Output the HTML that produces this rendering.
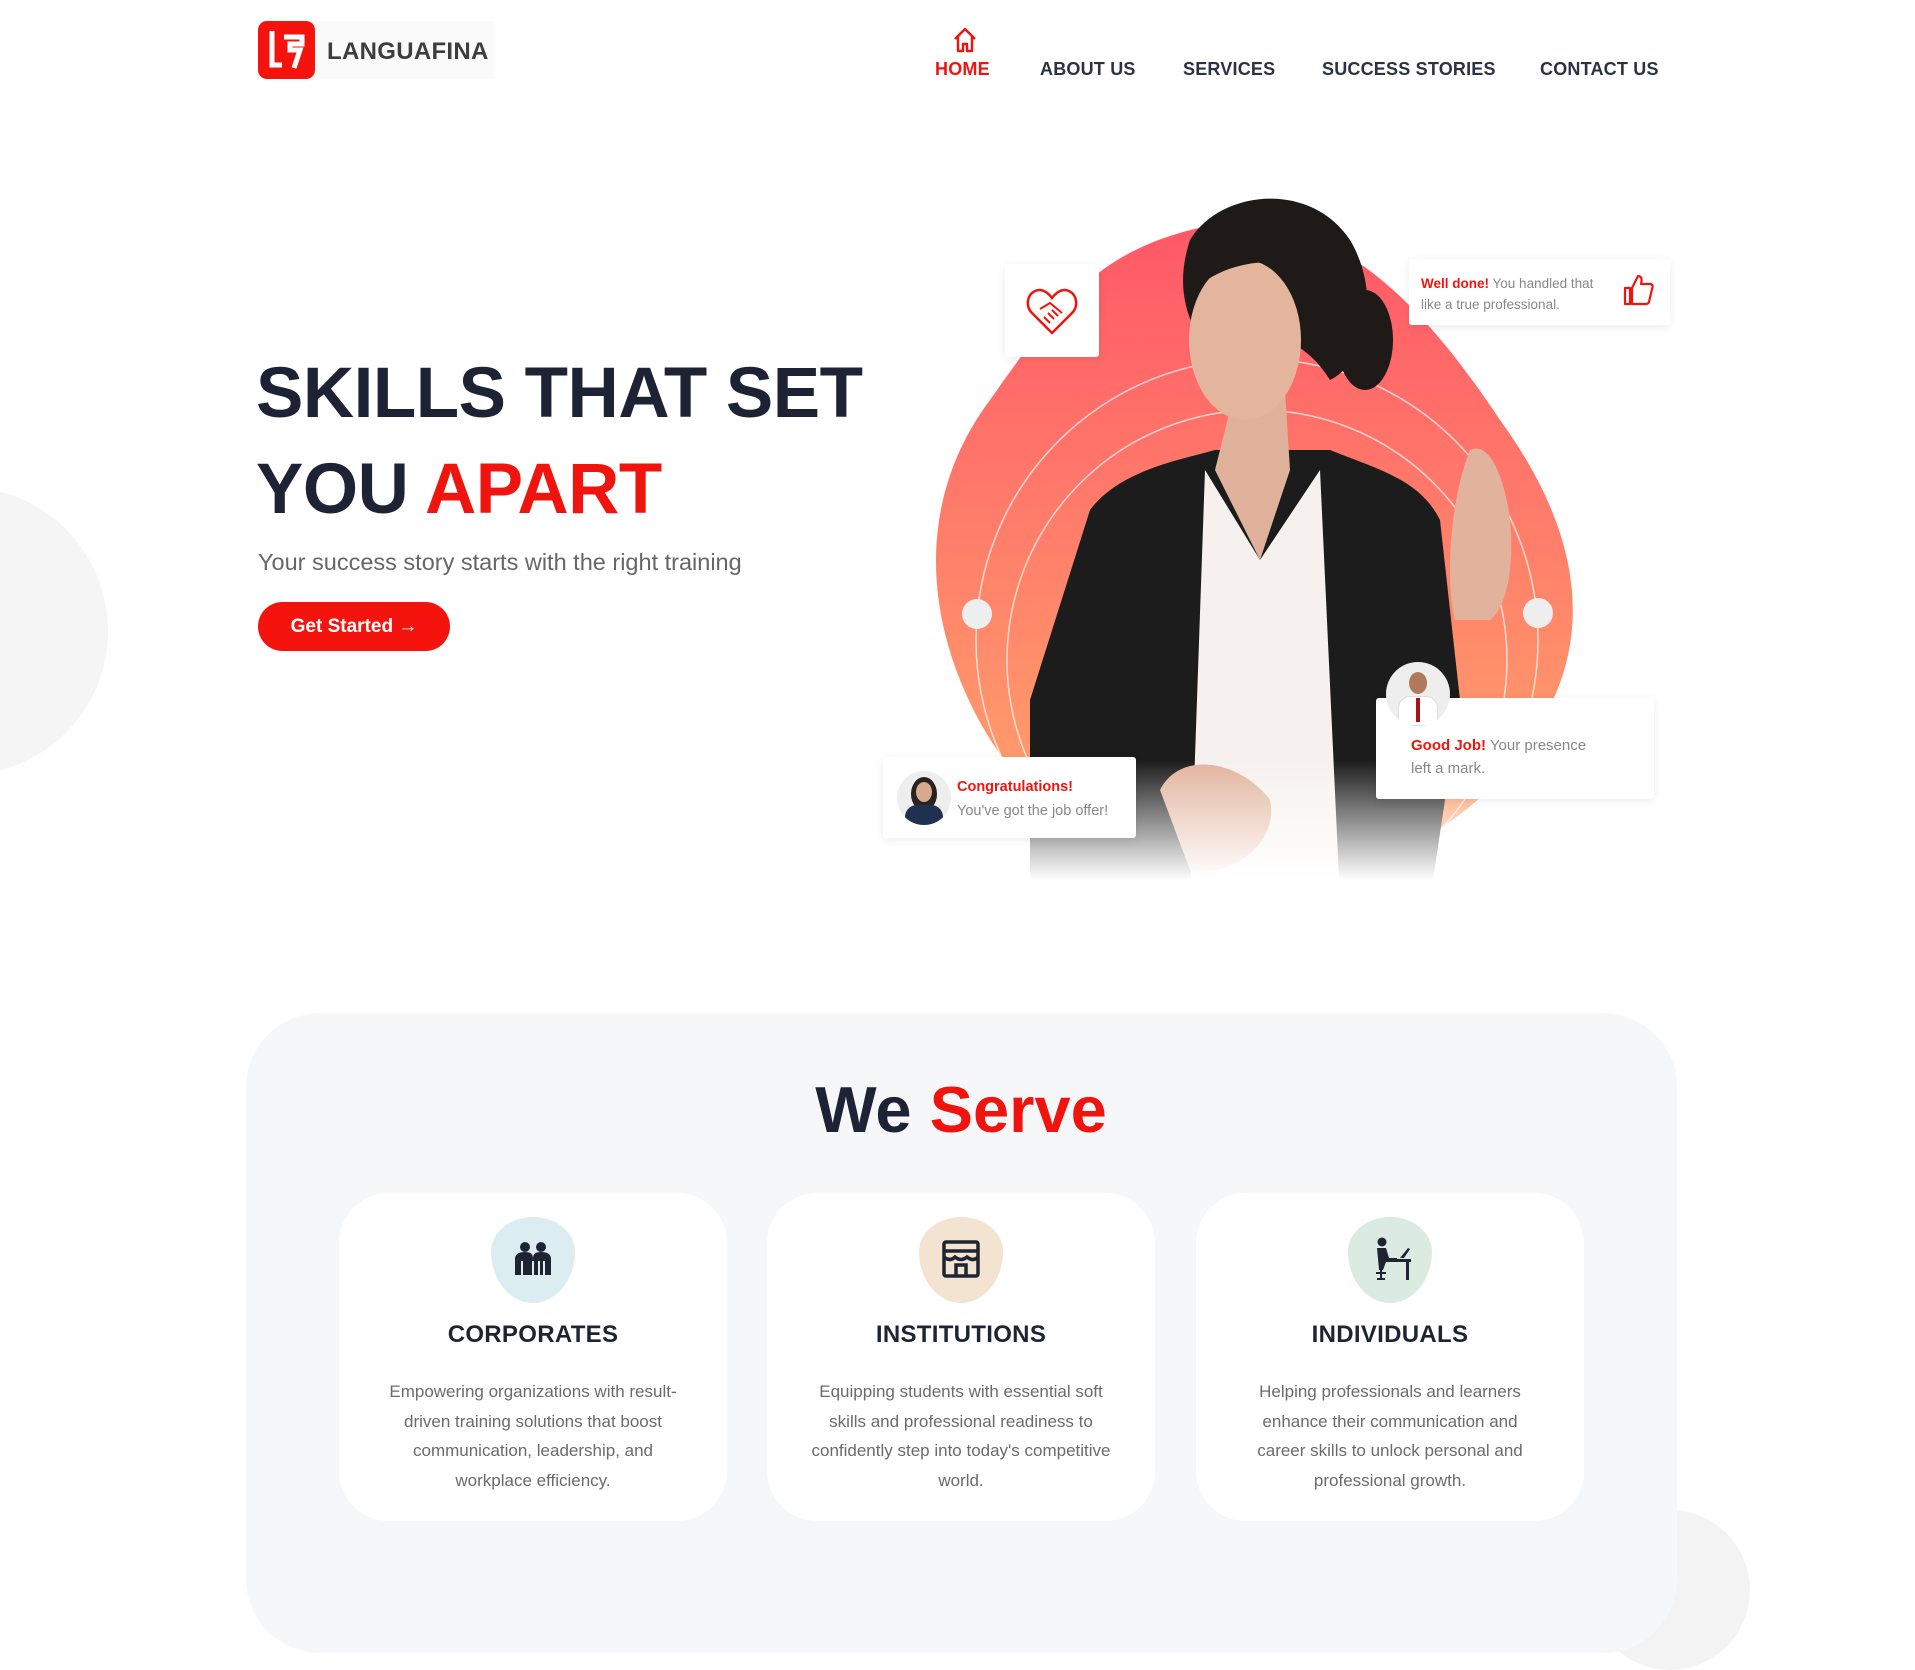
<!DOCTYPE html>
<html><head><meta charset="utf-8"><style>
*{margin:0;padding:0;box-sizing:border-box}
body{width:1915px;height:1594px;overflow:hidden;background:#fff;font-family:"Liberation Sans",sans-serif;position:relative}
.abs{position:absolute}
.nav{position:absolute;top:59px;font-size:18px;font-weight:bold;color:#2b3245;letter-spacing:.2px}
.card{position:absolute;background:#fff;box-shadow:0 2px 10px rgba(0,0,0,.08);border-radius:3px}
.red{color:#f0140e}
.sc{position:absolute;top:1193px;width:388px;height:328px;background:#fff;border-radius:50px;text-align:center}
.sc h3{position:absolute;top:128px;width:100%;font-size:24px;color:#1f2433;letter-spacing:.3px}
.sc p{position:absolute;top:184px;left:42px;right:42px;font-size:17px;line-height:29.5px;color:#6b6b6b}
.blob{position:absolute;top:24px;left:152px;width:84px;height:86px;border-radius:50% 50% 50% 50%/40% 40% 60% 60%}
</style></head><body>

<div class="abs" style="left:-180px;top:487px;width:288px;height:288px;border-radius:50%;background:#f5f5f5"></div>

<!-- logo -->
<div class="abs" style="left:258px;top:21px;width:236px;height:58px;background:#fafafa"></div>
<div class="abs" style="left:258px;top:21px;width:57px;height:58px;background:#f5140d;border-radius:9px"></div>
<svg class="abs" style="left:258px;top:21px" width="57" height="58"><path d="M14 10v34h10M26 16h18v7H32v6h10l-6 18" stroke="#fff" stroke-width="5" fill="none"/></svg>
<div class="abs" style="left:327px;top:38px;font-size:24px;font-weight:bold;color:#3d3d3d;letter-spacing:.3px">LANGUAFINA</div>

<!-- nav -->
<svg class="abs" style="left:952px;top:26px" width="26" height="28"><path d="M3 13L13 3l10 10M6 10v15h5v-7h4v7h5V10" stroke="#f0140e" stroke-width="2.4" fill="none" stroke-linejoin="round"/></svg>
<div class="nav red" style="left:935px">HOME</div>
<div class="nav" style="left:1040px">ABOUT US</div>
<div class="nav" style="left:1183px">SERVICES</div>
<div class="nav" style="left:1322px">SUCCESS STORIES</div>
<div class="nav" style="left:1540px">CONTACT US</div>

<!-- hero text -->
<div class="abs" style="left:256px;top:346px;font-size:71px;font-weight:bold;color:#1e2235;line-height:96px;letter-spacing:-.5px">SKILLS THAT SET<br>YOU <span class="red">APART</span></div>
<div class="abs" style="left:258px;top:549px;font-size:23.5px;color:#666">Your success story starts with the right training</div>
<div class="abs" style="left:258px;top:602px;width:192px;height:49px;border-radius:25px;background:#f5140d;color:#fff;font-size:19px;font-weight:bold;line-height:49px;text-align:center">Get Started →</div>

<!-- hero image -->
<svg class="abs" style="left:0;top:0" width="1915" height="960">
<defs>
<linearGradient id="g" x1="0" y1="0" x2="0" y2="1"><stop offset="0" stop-color="#ff5868"/><stop offset="1" stop-color="#ffa96c"/></linearGradient>
<linearGradient id="f" x1="0" y1="0" x2="0" y2="1"><stop offset="0" stop-color="#fff" stop-opacity="0"/><stop offset=".75" stop-color="#fff"/></linearGradient>
<clipPath id="c"><path id="bp" d="M1203,227 C1330,205 1420,300 1500,420 C1580,530 1600,640 1530,740 C1450,860 1300,900 1200,880 C1080,860 1000,780 960,680 C920,580 930,480 990,400 C1060,300 1100,250 1203,227 Z"/></clipPath>
</defs>
<use href="#bp" fill="url(#g)"/>
<g clip-path="url(#c)" fill="none" stroke="#fff" stroke-opacity=".7" stroke-width="1.5">
<circle cx="1257" cy="640" r="281"/><circle cx="1257" cy="660" r="250"/></g>
<circle cx="977" cy="614" r="15" fill="#eee"/><circle cx="1538" cy="613" r="15" fill="#eee"/>
<!-- woman -->
<path d="M1090,510 C1120,470 1180,460 1215,450 L1330,450 C1380,470 1420,480 1440,520 L1460,700 L1430,900 L1030,900 L1030,700 Z" fill="#1c1c1c"/>
<path d="M1205,470 L1260,560 L1320,470 L1340,900 L1190,900 Z" fill="#f6f1ee"/>
<path d="M1235,390 L1285,390 L1290,470 L1260,560 L1215,470 Z" fill="#e0b19a"/>
<path d="M1190,240 C1220,190 1310,180 1350,240 C1380,290 1370,360 1330,380 C1300,330 1240,320 1195,330 C1180,300 1180,270 1190,240 Z" fill="#1f1a18"/>
<ellipse cx="1365" cy="340" rx="28" ry="50" fill="#1f1a18"/>
<ellipse cx="1245" cy="340" rx="56" ry="80" fill="#e3b59c"/>
<path d="M1185,300 C1200,235 1280,225 1315,275 C1290,255 1220,255 1185,300Z" fill="#1f1a18"/>
<path d="M1470,450 C1490,440 1505,480 1510,520 C1515,570 1505,610 1490,620 L1455,620 C1445,580 1450,500 1470,450Z" fill="#e2b39c"/>
<path d="M1160,790 C1180,750 1240,760 1270,800 C1280,850 1220,880 1190,870 Z" fill="#e2b39c"/>
<rect x="1020" y="760" width="460" height="160" fill="url(#f)"/>
</svg>

<!-- floating cards -->
<div class="card" style="left:1005px;top:264px;width:94px;height:93px"></div>
<svg class="abs" style="left:1024px;top:283px" width="56" height="56"><path d="M28 50L8 30C0 22 4 8 15 7c6 0 10 4 13 8 3-4 7-8 13-8 11 1 15 15 7 23z" fill="none" stroke="#f0140e" stroke-width="2.5"/><path d="M16 26l10-6 12 10M20 34l6 6M24 30l6 6M28 27l6 6" stroke="#f0140e" stroke-width="2" fill="none"/></svg>

<div class="card" style="left:1409px;top:259px;width:261px;height:66px"></div>
<div class="abs" style="left:1421px;top:273px;font-size:13.5px;line-height:21px;color:#888"><b class="red">Well done!</b> You handled that<br>like a true professional.</div>
<svg class="abs" style="left:1622px;top:274px" width="32" height="34"><path d="M3 14h5v16H3zM10 14l6-12c4 0 4 4 3 8h9c3 0 3 3 2 5l-3 13c-1 2-2 2-4 2H10z" fill="none" stroke="#f0140e" stroke-width="2.2" stroke-linejoin="round"/></svg>

<div class="card" style="left:1376px;top:698px;width:278px;height:101px"></div>
<div class="abs" style="left:1386px;top:662px;width:64px;height:64px;border-radius:50%;background:#eee;overflow:hidden"><div style="position:absolute;left:23px;top:10px;width:18px;height:22px;border-radius:50%;background:#b07a5a"></div><div style="position:absolute;left:12px;top:34px;width:40px;height:30px;border-radius:12px 12px 0 0;background:#fff;border:1px solid #ddd"></div><div style="position:absolute;left:30px;top:36px;width:4px;height:24px;background:#a11"></div></div>
<div class="abs" style="left:1411px;top:734px;font-size:15px;line-height:23px;color:#888"><b class="red">Good Job!</b> Your presence<br>left a mark.</div>

<div class="card" style="left:883px;top:757px;width:253px;height:81px"></div>
<div class="abs" style="left:897px;top:771px;width:54px;height:54px;border-radius:50%;background:#eee;overflow:hidden"><div style="position:absolute;left:14px;top:6px;width:26px;height:34px;border-radius:50%;background:#2a2220"></div><div style="position:absolute;left:19px;top:11px;width:16px;height:20px;border-radius:50%;background:#d9a98c"></div><div style="position:absolute;left:8px;top:34px;width:38px;height:24px;border-radius:12px 12px 0 0;background:#1f3050"></div></div>
<div class="abs" style="left:957px;top:775px;font-size:14.5px;line-height:24px;color:#888"><b class="red">Congratulations!</b><br>You've got the job offer!</div>

<!-- we serve -->
<div class="abs" style="left:1590px;top:1510px;width:160px;height:160px;border-radius:50%;background:#f3f3f3"></div>
<div class="abs" style="left:246px;top:1013px;width:1431px;height:640px;background:#f6f7f9;border-radius:74px"></div>
<div class="abs" style="left:0;width:1922px;top:1072px;text-align:center;font-size:65px;font-weight:bold;color:#1e2235">We <span class="red">Serve</span></div>

<div class="sc" style="left:339px"><div class="blob" style="background:#dcedf1"></div>
<svg class="abs" style="left:174px;top:48px" width="40" height="36" fill="#1f2433"><circle cx="12" cy="6" r="5"/><circle cx="28" cy="6" r="5"/><path d="M2 34V18c0-5 4-7 10-7s8 2 8 7c0-5 2-7 8-7s10 2 10 7v16h-6V20h-2v14h-3V20h-2v14h-4V20h-2v14H10V20H8v14z"/></svg>
<h3>CORPORATES</h3><p>Empowering organizations with result-driven training solutions that boost communication, leadership, and workplace efficiency.</p></div>

<div class="sc" style="left:767px"><div class="blob" style="background:#f3e3d1"></div>
<svg class="abs" style="left:174px;top:46px" width="40" height="40" fill="none" stroke="#1f2433" stroke-width="3.5"><rect x="3" y="3" width="34" height="34" rx="2"/><path d="M3 12h34M3 18q6 5 11 0q6 5 12 0q6 5 11 0M15 37V26h10v11"/></svg>
<h3>INSTITUTIONS</h3><p>Equipping students with essential soft skills and professional readiness to confidently step into today's competitive world.</p></div>

<div class="sc" style="left:1196px"><div class="blob" style="background:#dcebe2"></div>
<svg class="abs" style="left:176px;top:44px" width="40" height="44" fill="#1f2433"><circle cx="10" cy="5" r="4.5"/><path d="M5 11h9l3 10h8v4H14l-3 8H7zM22 22h17v3h-2v18h-3V25H22z"/><path d="M28 21l8-10 2 1-6 9z"/><path d="M4 36h10M9 33v8M5 42h8" stroke="#1f2433" stroke-width="2"/></svg>
<h3>INDIVIDUALS</h3><p>Helping professionals and learners enhance their communication and career skills to unlock personal and professional growth.</p></div>

</body></html>
